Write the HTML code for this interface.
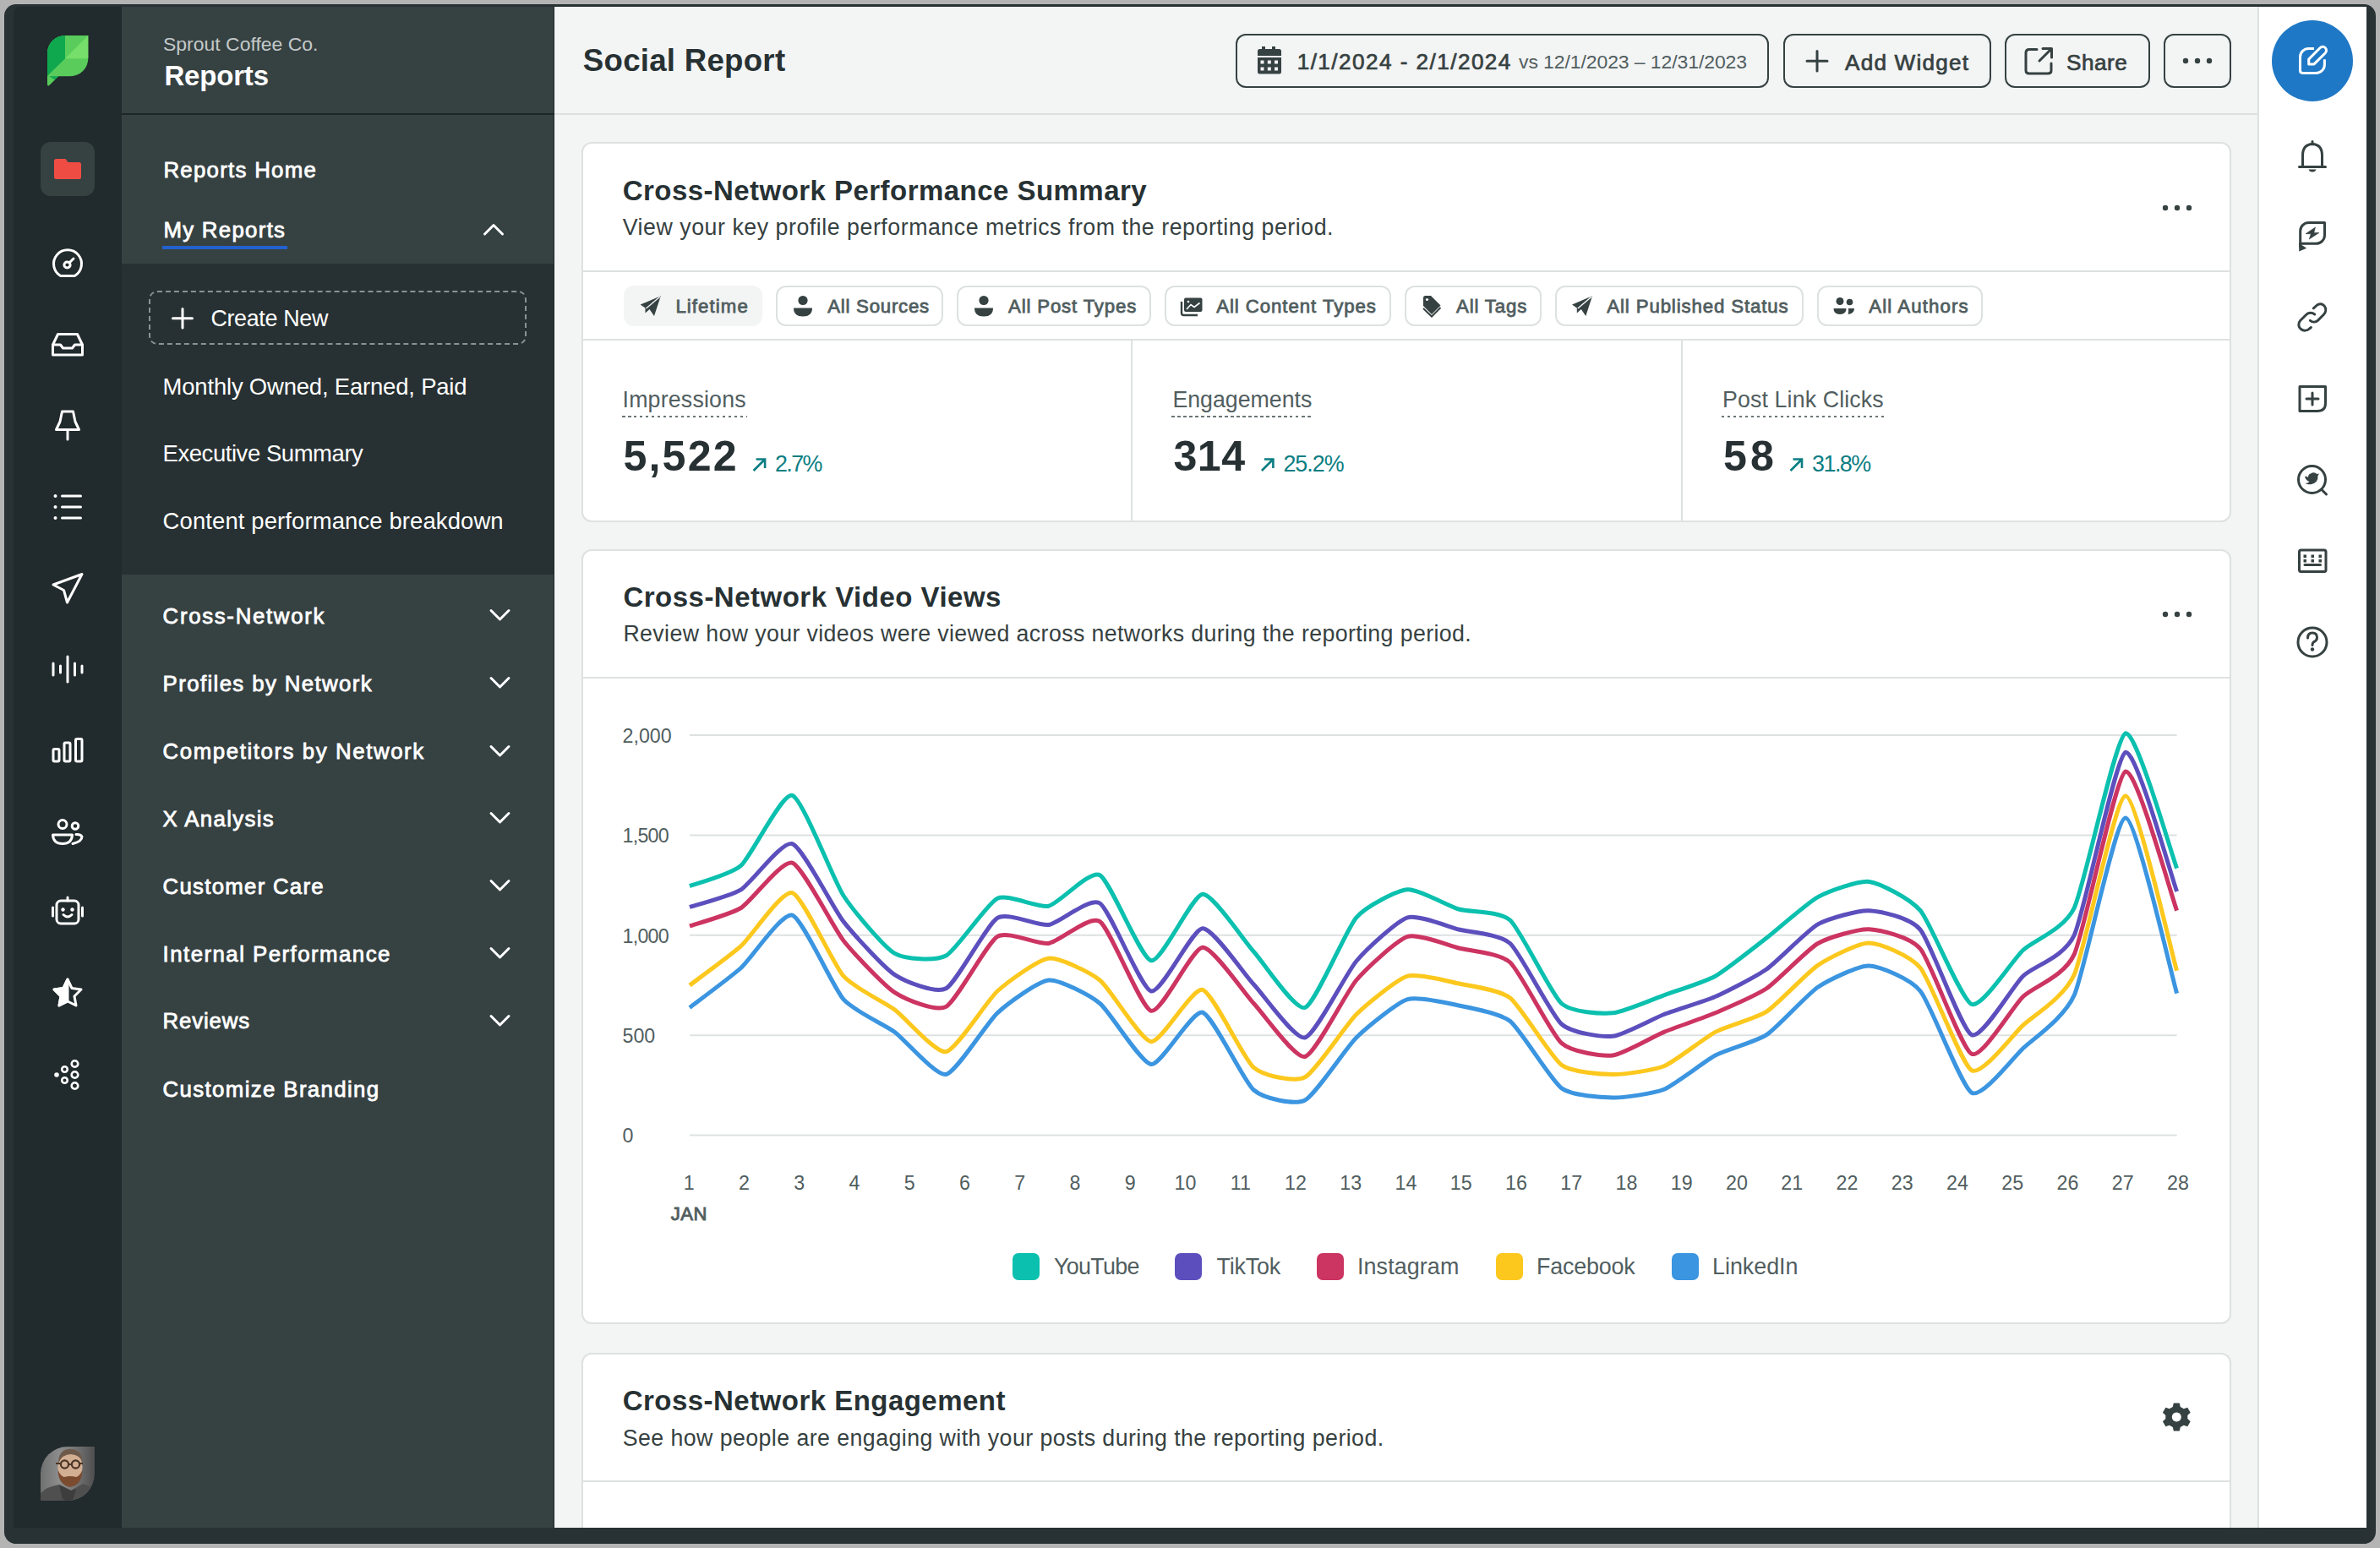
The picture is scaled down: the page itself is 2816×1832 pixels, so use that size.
<!DOCTYPE html>
<html><head><meta charset="utf-8"><title>Social Report</title>
<style>
html,body{margin:0;padding:0;}
body{width:2816px;height:1832px;position:relative;overflow:hidden;background:#b4b4b4;font-family:"Liberation Sans",sans-serif;}
.a{position:absolute;}
.t{position:absolute;white-space:nowrap;line-height:1;}
svg.a{overflow:visible;}
</style></head><body>
<div class="a" style="left:5px;top:5px;width:2806px;height:1822px;background:#283133;border-radius:14px;"></div>
<div class="a" style="left:16px;top:8px;width:128px;height:1800px;background:#212a2c;border-top-left-radius:8px;"></div>
<div class="a" style="left:144px;top:8px;width:512px;height:1800px;background:#364142;"></div>
<div class="a" style="left:144px;top:312px;width:512px;height:368px;background:#273032;"></div>
<div class="a" style="left:144px;top:134px;width:512px;height:2px;background:#1d2527;"></div>
<div class="a" style="left:655px;top:8px;width:1px;height:1800px;background:#1d2527;"></div>
<div class="a" style="left:656px;top:8px;width:2017px;height:1800px;background:#f3f4f4;"></div>
<div class="a" style="left:656px;top:134px;width:2017px;height:2px;background:#dee1e1;"></div>
<div class="a" style="left:2673px;top:8px;width:127px;height:1800px;background:#fff;"></div>
<div class="a" style="left:2671px;top:8px;width:2px;height:1800px;background:#dee1e1;"></div>
<svg class="a" style="left:50px;top:36px;" width="60" height="72" viewBox="50 36 60 72">
<defs><clipPath id="lf"><path d="M56 62.9 A21 21 0 0 1 77 41.9 H104.3 V69.2 A21 21 0 0 1 83.3 90.2 H69.2 L58.6 100.8 Q57 102.4 56 100.5 Z"/></clipPath></defs>
<g clip-path="url(#lf)">
<rect x="50" y="36" width="60" height="72" fill="#59cc5b"/>
<path d="M50 36 H77 V69.2 L50 96 Z" fill="#0fa84f"/>
<path d="M77 69.2 L104.3 41.9 L110 41.9 V69.2 Z" fill="#76de6a"/>
<path d="M58 90.2 L69.2 90.2 L65 94.5 Z" fill="#0fa84f"/>
</g></svg>
<div class="a" style="left:48px;top:168px;width:64px;height:64px;background:#364142;border-radius:12px;"></div>
<svg class="a" style="left:60px;top:184px;" width="40" height="32" viewBox="60 184 40 32"><path d="M64 190.5 Q64 188 66.5 188 H77.5 L80.5 192 H93.5 Q96 192 96 194.5 V209.5 Q96 212 93.5 212 H66.5 Q64 212 64 209.5 Z" fill="#ef4d44"/></svg>
<svg class="a" style="left:56px;top:288px;" width="48" height="48" viewBox="56 288 48 48"><g fill="none" stroke="#ffffff" stroke-width="3" stroke-linecap="round" stroke-linejoin="round"><path d="M71.6 326.5 A16.5 16.5 0 1 1 88.4 326.5 Z"/><circle cx="79.5" cy="313.5" r="3.6"/><path d="M82.3 310.7 L87 306"/></g></svg>
<svg class="a" style="left:56px;top:384px;" width="48" height="48" viewBox="56 384 48 48"><g fill="none" stroke="#ffffff" stroke-width="3" stroke-linecap="round" stroke-linejoin="round"><path d="M62.5 408 L68.5 395.5 H91.5 L97.5 408 V420 H62.5 Z"/><path d="M62.5 408 H71.5 L74.5 412 H85.5 L88.5 408 H97.5"/></g></svg>
<svg class="a" style="left:56px;top:480px;" width="48" height="48" viewBox="56 480 48 48"><g fill="none" stroke="#ffffff" stroke-width="3" stroke-linecap="round" stroke-linejoin="round"><path d="M73.5 487 H86.5 L89 499 L93.5 508.5 H66.5 L71 499 Z"/><path d="M80 509 V520"/></g></svg>
<svg class="a" style="left:56px;top:576px;" width="48" height="48" viewBox="56 576 48 48"><g fill="none" stroke="#ffffff" stroke-width="3" stroke-linecap="round" stroke-linejoin="round"><path d="M73.5 587 H95.5 M73.5 600 H95.5 M73.5 613 H95.5"/></g><g fill="#ffffff"><circle cx="65.5" cy="587" r="2"/><circle cx="65.5" cy="600" r="2"/><circle cx="65.5" cy="613" r="2"/></g></svg>
<svg class="a" style="left:56px;top:672px;" width="48" height="48" viewBox="56 672 48 48"><g fill="none" stroke="#ffffff" stroke-width="3" stroke-linecap="round" stroke-linejoin="round"><path d="M63 692 L97 679.5 L79.5 713 L75.5 698.5 Z"/></g></svg>
<svg class="a" style="left:56px;top:768px;" width="48" height="48" viewBox="56 768 48 48"><g fill="none" stroke="#ffffff" stroke-width="3" stroke-linecap="round" stroke-linejoin="round"><path d="M63 785 V799 M71.5 788 V796 M80 777 V807 M88.5 785 V799 M97 788 V796"/></g></svg>
<svg class="a" style="left:56px;top:864px;" width="48" height="48" viewBox="56 864 48 48"><g fill="none" stroke="#ffffff" stroke-width="3" stroke-linecap="round" stroke-linejoin="round"><rect x="63" y="886.5" width="7" height="14.5" rx="1.5"/><rect x="76" y="879" width="7" height="22" rx="1.5"/><rect x="89.5" y="874.5" width="7.5" height="26.5" rx="1.5"/></g></svg>
<svg class="a" style="left:56px;top:960px;" width="48" height="48" viewBox="56 960 48 48"><g fill="none" stroke="#ffffff" stroke-width="3" stroke-linecap="round" stroke-linejoin="round"><circle cx="74" cy="975.5" r="5"/><path d="M62.5 988 H85.5 Q85 998.5 74 998.5 Q63 998.5 62.5 988 Z"/><circle cx="89" cy="977.5" r="3.8"/><path d="M86 998.5 Q97 996 97 990 Q95 987 90 987.5"/></g></svg>
<svg class="a" style="left:56px;top:1054px;" width="48" height="48" viewBox="56 1054 48 48"><g fill="none" stroke="#ffffff" stroke-width="3" stroke-linecap="round" stroke-linejoin="round"><rect x="67" y="1066" width="26" height="27" rx="5"/><path d="M80 1062 V1066 M62.5 1074 V1084 M97.5 1074 V1084"/><path d="M75 1082.5 Q80 1087.5 85 1082.5"/></g><g fill="#ffffff"><circle cx="74.5" cy="1076.5" r="2.2"/><circle cx="85.5" cy="1076.5" r="2.2"/></g></svg>
<svg class="a" style="left:56px;top:1151px;" width="48" height="48" viewBox="56 1151 48 48"><g fill="none" stroke="#ffffff" stroke-width="3" stroke-linecap="round" stroke-linejoin="round"><path d="M80 1159 L85 1169.5 L96 1171 L88 1179 L90 1190 L80 1185 L70 1190 L72 1179 L64 1171 L75 1169.5 Z"/></g><path d="M80 1159 L75 1169.5 L64 1171 L72 1179 L70 1190 L80 1185 Z" fill="#ffffff" stroke="#ffffff" stroke-width="3" stroke-linejoin="round"/></svg>
<svg class="a" style="left:56px;top:1248px;" width="48" height="48" viewBox="56 1248 48 48"><circle cx="67" cy="1272" r="2.8" fill="#ffffff"/><g fill="none" stroke="#ffffff" stroke-width="2.6"><circle cx="76.5" cy="1265.5" r="3.3"/><circle cx="76.5" cy="1278.5" r="3.3"/><circle cx="88.5" cy="1259" r="3.8"/><circle cx="88.5" cy="1272" r="3.8"/><circle cx="88.5" cy="1285" r="3.8"/></g></svg>
<svg class="a" style="left:48px;top:1712px" width="64" height="64" viewBox="0 0 64 64">
<defs><clipPath id="avc"><path d="M32 0 H64 V32 A32 32 0 0 1 32 64 H0 V32 A32 32 0 0 1 32 0 Z"/></clipPath>
<linearGradient id="avbg" x1="0" x2="1" y1="0" y2="0"><stop offset="0" stop-color="#6f7070"/><stop offset="0.35" stop-color="#8d8d8d"/><stop offset="0.75" stop-color="#6a6a6a"/><stop offset="1" stop-color="#4e4e4e"/></linearGradient></defs>
<g clip-path="url(#avc)">
<rect width="64" height="64" fill="url(#avbg)"/>
<path d="M0 64 V55 Q8 47 22 45 L36 52 L50 44 Q60 47 64 52 V64 Z" fill="#4f4f50"/>
<path d="M22 45 L26 62 L30 64 H38 L42 50 L36 52 Z" fill="#3d3d3e"/>
<ellipse cx="35" cy="24" rx="14.5" ry="19" fill="#d2ae93"/>
<path d="M21 20 Q21 3 35 3 Q49 3 50 19 Q47 10 36 9 Q25 9 21 20 Z" fill="#6e5a4a"/>
<path d="M20.5 28 Q21 45 35 48 Q49 45 49.5 28 Q46 35 42 36 Q35 34 28 36 Q24 35 20.5 28 Z" fill="#7b4b30"/>
<g fill="none" stroke="#4a3526" stroke-width="2.2"><circle cx="28.5" cy="21" r="4.6"/><circle cx="41.5" cy="21" r="4.6"/><path d="M33 21 H37 M18 20 H24 M46 20 H50"/></g>
</g></svg>
<div class="t" style="left:193.00px;top:41.26px;font-size:22.97px;color:#c3c9c9;">Sprout Coffee Co.</div>
<div class="t" style="left:194.40px;top:72.87px;font-size:32.99px;color:#ffffff;font-weight:700;letter-spacing:-0.167px;">Reports</div>
<div class="t" style="left:193.40px;top:188.62px;font-size:25.84px;color:#ffffff;letter-spacing:1.273px;-webkit-text-stroke:0.8px #ffffff;">Reports Home</div>
<div class="t" style="left:193.40px;top:260.12px;font-size:25.84px;color:#ffffff;letter-spacing:1.289px;-webkit-text-stroke:0.8px #ffffff;">My Reports</div>
<div class="a" style="left:192px;top:291px;width:148px;height:4px;background:#2461cf;"></div>
<svg class="a" style="left:568px;top:258px;" width="32" height="26" viewBox="568 258 32 26"><path d="M573.5 277 L584 266.5 L594.5 277" fill="none" stroke="#fff" stroke-width="3" stroke-linecap="round" stroke-linejoin="round"/></svg>
<div class="a" style="left:176px;top:344px;width:447px;height:64px;box-sizing:border-box;border:2px dashed #8a9394;border-radius:10px;"></div>
<svg class="a" style="left:200px;top:364px;" width="32" height="26" viewBox="200 364 32 26"><path d="M216 365.5 V388 M204.5 376.7 H227.5" stroke="#fff" stroke-width="3" stroke-linecap="round"/></svg>
<div class="t" style="left:249.40px;top:363.94px;font-size:26.89px;color:#ffffff;letter-spacing:-0.333px;">Create New</div>
<div class="t" style="left:192.60px;top:443.55px;font-size:27.47px;color:#ffffff;letter-spacing:-0.192px;">Monthly Owned, Earned, Paid</div>
<div class="t" style="left:192.60px;top:523.45px;font-size:27.47px;color:#ffffff;letter-spacing:-0.438px;">Executive Summary</div>
<div class="t" style="left:192.60px;top:603.45px;font-size:27.47px;color:#ffffff;letter-spacing:0.107px;">Content performance breakdown</div>
<div class="t" style="left:192.60px;top:716.82px;font-size:25.84px;color:#ffffff;letter-spacing:1.667px;-webkit-text-stroke:0.8px #ffffff;">Cross-Network</div>
<svg class="a" style="left:576px;top:716px;" width="32" height="20" viewBox="576 716 32 20"><path d="M581 722.5 L591.5 733 L602 722.5" fill="none" stroke="#fff" stroke-width="3" stroke-linecap="round" stroke-linejoin="round"/></svg>
<div class="t" style="left:192.60px;top:796.82px;font-size:25.84px;color:#ffffff;letter-spacing:1.367px;-webkit-text-stroke:0.8px #ffffff;">Profiles by Network</div>
<svg class="a" style="left:576px;top:796px;" width="32" height="20" viewBox="576 796 32 20"><path d="M581 802.5 L591.5 813 L602 802.5" fill="none" stroke="#fff" stroke-width="3" stroke-linecap="round" stroke-linejoin="round"/></svg>
<div class="t" style="left:192.60px;top:877.32px;font-size:25.84px;color:#ffffff;letter-spacing:1.571px;-webkit-text-stroke:0.8px #ffffff;">Competitors by Network</div>
<svg class="a" style="left:576px;top:876.5px;" width="32" height="20" viewBox="576 876.5 32 20"><path d="M581 883.0 L591.5 893.5 L602 883.0" fill="none" stroke="#fff" stroke-width="3" stroke-linecap="round" stroke-linejoin="round"/></svg>
<div class="t" style="left:192.60px;top:956.82px;font-size:25.84px;color:#ffffff;letter-spacing:1.333px;-webkit-text-stroke:0.8px #ffffff;">X Analysis</div>
<svg class="a" style="left:576px;top:956px;" width="32" height="20" viewBox="576 956 32 20"><path d="M581 962.5 L591.5 973 L602 962.5" fill="none" stroke="#fff" stroke-width="3" stroke-linecap="round" stroke-linejoin="round"/></svg>
<div class="t" style="left:192.60px;top:1036.82px;font-size:25.84px;color:#ffffff;letter-spacing:1.250px;-webkit-text-stroke:0.8px #ffffff;">Customer Care</div>
<svg class="a" style="left:576px;top:1036px;" width="32" height="20" viewBox="576 1036 32 20"><path d="M581 1042.5 L591.5 1053 L602 1042.5" fill="none" stroke="#fff" stroke-width="3" stroke-linecap="round" stroke-linejoin="round"/></svg>
<div class="t" style="left:192.60px;top:1116.82px;font-size:25.84px;color:#ffffff;letter-spacing:1.453px;-webkit-text-stroke:0.8px #ffffff;">Internal Performance</div>
<svg class="a" style="left:576px;top:1116px;" width="32" height="20" viewBox="576 1116 32 20"><path d="M581 1122.5 L591.5 1133 L602 1122.5" fill="none" stroke="#fff" stroke-width="3" stroke-linecap="round" stroke-linejoin="round"/></svg>
<div class="t" style="left:192.60px;top:1196.42px;font-size:25.84px;color:#ffffff;letter-spacing:0.833px;-webkit-text-stroke:0.8px #ffffff;">Reviews</div>
<svg class="a" style="left:576px;top:1195.6px;" width="32" height="20" viewBox="576 1195.6 32 20"><path d="M581 1202.1 L591.5 1212.6 L602 1202.1" fill="none" stroke="#fff" stroke-width="3" stroke-linecap="round" stroke-linejoin="round"/></svg>
<div class="t" style="left:192.60px;top:1277.32px;font-size:25.84px;color:#ffffff;letter-spacing:1.353px;-webkit-text-stroke:0.8px #ffffff;">Customize Branding</div>
<div class="t" style="left:689.80px;top:53.69px;font-size:36.63px;color:#273133;font-weight:700;letter-spacing:0.267px;">Social Report</div>
<div class="a" style="left:1462px;top:40px;width:631px;height:64px;box-sizing:border-box;border:2px solid #364141;border-radius:12px;"></div>
<svg class="a" style="left:1486px;top:54px;" width="32" height="36" viewBox="1486 54 32 36"><path d="M1488 66 V60.5 Q1488 58 1490.5 58 H1493 V55 H1497 V58 H1505 V55 H1509 V58 H1513.5 Q1516 58 1516 60.5 V66 Z M1488 68 H1516 V85 Q1516 87.5 1513.5 87.5 H1490.5 Q1488 87.5 1488 85 Z" fill="#364141"/><g fill="#f3f4f4"><rect x="1491.5" y="71.5" width="4" height="4"/><rect x="1499.8" y="71.5" width="4" height="4"/><rect x="1508" y="71.5" width="4" height="4"/><rect x="1491.5" y="79.5" width="4" height="4"/><rect x="1499.8" y="79.5" width="4" height="4"/><rect x="1508" y="79.5" width="4" height="4"/></g></svg>
<div class="t" style="left:1534.70px;top:60.49px;font-size:26.12px;color:#364141;letter-spacing:1.456px;-webkit-text-stroke:0.7px #364141;">1/1/2024 - 2/1/2024</div>
<div class="t" style="left:1797.00px;top:61.56px;font-size:22.97px;color:#515e5f;letter-spacing:-0.083px;">vs 12/1/2023 – 12/31/2023</div>
<div class="a" style="left:2110px;top:40px;width:246px;height:64px;box-sizing:border-box;border:2px solid #364141;border-radius:12px;"></div>
<svg class="a" style="left:2134px;top:58px;" width="32" height="28" viewBox="2134 58 32 28"><path d="M2150 60.5 V84 M2138 72.2 H2162" stroke="#364141" stroke-width="3" stroke-linecap="round"/></svg>
<div class="t" style="left:2183.00px;top:60.59px;font-size:26.12px;color:#364141;letter-spacing:1.222px;-webkit-text-stroke:0.7px #364141;">Add Widget</div>
<div class="a" style="left:2372px;top:40px;width:172px;height:64px;box-sizing:border-box;border:2px solid #364141;border-radius:12px;"></div>
<svg class="a" style="left:2392px;top:54px;" width="40" height="36" viewBox="2392 54 40 36"><g fill="none" stroke="#364141" stroke-width="3" stroke-linecap="round" stroke-linejoin="round"><path d="M2410 58.5 H2401 Q2397 58.5 2397 62.5 V83.5 Q2397 87 2401 87 H2423 Q2427 87 2427 83.5 V75"/><path d="M2413 72 L2427 58 M2417 57.5 H2427.5 V68"/></g></svg>
<div class="t" style="left:2445.00px;top:60.59px;font-size:26.12px;color:#364141;letter-spacing:0.500px;-webkit-text-stroke:0.7px #364141;">Share</div>
<div class="a" style="left:2560px;top:40px;width:80px;height:64px;box-sizing:border-box;border:2px solid #364141;border-radius:12px;"></div>
<svg class="a" style="left:2578px;top:64px;" width="44" height="16" viewBox="2578 64 44 16"><g fill="#364141"><circle cx="2586" cy="72" r="3.2"/><circle cx="2600" cy="72" r="3.2"/><circle cx="2614" cy="72" r="3.2"/></g></svg>
<div class="a" style="left:2688px;top:24px;width:96px;height:96px;border-radius:50%;background:#1f78c5;"></div>
<svg class="a" style="left:2712px;top:50px;" width="48" height="44" viewBox="2712 50 48 44"><g fill="none" stroke="#fff" stroke-width="3" stroke-linejoin="round"><path d="M2737.9 57.5 H2731.5 A10 10 0 0 0 2721.5 67.5 V83.5 Q2721.5 86.4 2724.4 86.4 H2740.4 A10 10 0 0 0 2750.4 76.4 V70.2"/><path d="M2731.7 75.9 V70.1 L2745 56.8 C2747 54.8 2749.5 54.8 2751.2 56.5 C2753 58.3 2753 61 2751 63 L2738 75.9 Z"/></g></svg>
<svg class="a" style="left:2712px;top:160px;" width="48" height="48" viewBox="2712 160 48 48"><g fill="none" stroke="#364141" stroke-width="3" stroke-linecap="round" stroke-linejoin="round"><path d="M2720.5 197.5 H2751.5 M2724.5 197.5 V184 Q2724.5 171 2736 170.5 Q2747.5 171 2747.5 184 V197.5"/><path d="M2736 167.5 V170"/></g><path d="M2731.5 200.5 H2740.5 Q2739.5 203.5 2736 203.5 Q2732.5 203.5 2731.5 200.5 Z" fill="#364141"/></svg>
<svg class="a" style="left:2712px;top:255px;" width="48" height="48" viewBox="2712 255 48 48"><g fill="none" stroke="#364141" stroke-width="3" stroke-linecap="round" stroke-linejoin="round"><path d="M2721.7 292 V273.5 A10 10 0 0 1 2731.7 263.5 H2750.5 V278.3 A10 10 0 0 1 2740.5 288.3 H2723.5"/></g><path d="M2720.2 287 V297.6 L2729.2 293.7 L2723.5 290 Z" fill="#364141"/><path d="M2739.5 269 L2728 276.7 H2734.3 L2732.3 283 L2744 275.4 H2737.8 Z" fill="#364141" stroke="#364141" stroke-width="0.6" stroke-linejoin="round"/></svg>
<svg class="a" style="left:2712px;top:352px;" width="48" height="48" viewBox="2712 352 48 48"><g fill="none" stroke="#364141" stroke-width="3" stroke-linecap="round" stroke-linejoin="round"><path d="M2738.7 372 C2735.5 369.5 2731 369.8 2728.6 372.5 L2721.8 379.3 C2718.8 382.5 2719.2 387 2722.5 389.5 C2725.5 392 2730 391.5 2732.5 389 L2734.4 387.5"/><path d="M2737.3 364.8 L2741.6 361 C2744.5 358.7 2748.5 359.5 2750.5 362.5 C2752.5 365.5 2752 369.5 2749.4 372.2 L2742.6 379.1 C2740 381.5 2736 381.5 2733.4 379.3"/></g></svg>
<svg class="a" style="left:2712px;top:448px;" width="48" height="48" viewBox="2712 448 48 48"><g fill="none" stroke="#364141" stroke-width="3" stroke-linecap="round" stroke-linejoin="round"><path d="M2721 457.5 H2751.5 V477 Q2751.5 486.5 2742 486.5 H2721 Z"/><path d="M2736 465 V479 M2729 472 H2743"/></g></svg>
<svg class="a" style="left:2712px;top:543px;" width="48" height="48" viewBox="2712 543 48 48"><g fill="none" stroke="#364141" stroke-width="3" stroke-linecap="round" stroke-linejoin="round"><circle cx="2735.5" cy="567.5" r="16"/><path d="M2747 579.5 L2752.5 585"/></g><path d="M2727 564 Q2729 563 2731 565 Q2731 561 2734 560.5 Q2738 558 2741.5 561 L2744 560.5 L2742.5 563 Q2743 571 2735 573 Q2731 574 2727.5 572 Q2731 572 2732.5 570 Q2728.5 569 2727 564 Z" fill="#364141"/></svg>
<svg class="a" style="left:2712px;top:640px;" width="48" height="48" viewBox="2712 640 48 48"><g fill="none" stroke="#364141" stroke-width="3" stroke-linecap="round" stroke-linejoin="round"><rect x="2720.5" y="651" width="31.5" height="25.5" rx="2"/><path d="M2727 668.5 H2745.5"/></g><g fill="#364141"><rect x="2725.5" y="656.5" width="3.5" height="3.5"/><rect x="2734.5" y="656.5" width="3.5" height="3.5"/><rect x="2743.5" y="656.5" width="3.5" height="3.5"/><rect x="2725.5" y="662" width="3.5" height="3.5"/><rect x="2734.5" y="662" width="3.5" height="3.5"/><rect x="2743.5" y="662" width="3.5" height="3.5"/></g></svg>
<svg class="a" style="left:2712px;top:736px;" width="48" height="48" viewBox="2712 736 48 48"><g fill="none" stroke="#364141" stroke-width="3" stroke-linecap="round" stroke-linejoin="round"><circle cx="2736" cy="760" r="17"/><path d="M2730.5 755 Q2730.5 749 2736 749 Q2741.5 749 2741.5 754.5 Q2741.5 758 2738 759.5 Q2736 760.5 2736 763.5"/></g><circle cx="2736" cy="768.5" r="2.2" fill="#364141"/></svg>
<div class="a" style="left:688px;top:168px;width:1952px;height:450px;box-sizing:border-box;background:#fff;border:2px solid #dee1e1;border-radius:12px;"></div>
<div class="t" style="left:736.70px;top:208.87px;font-size:32.99px;color:#273133;font-weight:700;letter-spacing:0.469px;">Cross-Network Performance Summary</div>
<div class="t" style="left:736.70px;top:256.06px;font-size:26.74px;color:#364141;letter-spacing:0.537px;">View your key profile performance metrics from the reporting period.</div>
<svg class="a" style="left:2550px;top:236px;" width="52" height="20" viewBox="2550 236 52 20"><g fill="#364141"><circle cx="2562" cy="246" r="3.2"/><circle cx="2576" cy="246" r="3.2"/><circle cx="2590" cy="246" r="3.2"/></g></svg>
<div class="a" style="left:690px;top:320px;width:1948px;height:2px;background:#dee1e1;"></div>
<div class="a" style="left:690px;top:401px;width:1948px;height:2px;background:#dee1e1;"></div>
<div class="a" style="left:738px;top:338px;width:164px;height:48px;background:#f3f4f4;border-radius:12px;"></div>
<div class="a" style="left:918px;top:338px;width:198px;height:48px;box-sizing:border-box;border:2px solid #dee1e1;border-radius:12px;"></div>
<div class="a" style="left:1132px;top:338px;width:230px;height:48px;box-sizing:border-box;border:2px solid #dee1e1;border-radius:12px;"></div>
<div class="a" style="left:1378px;top:338px;width:268px;height:48px;box-sizing:border-box;border:2px solid #dee1e1;border-radius:12px;"></div>
<div class="a" style="left:1662px;top:338px;width:162px;height:48px;box-sizing:border-box;border:2px solid #dee1e1;border-radius:12px;"></div>
<div class="a" style="left:1840px;top:338px;width:294px;height:48px;box-sizing:border-box;border:2px solid #dee1e1;border-radius:12px;"></div>
<div class="a" style="left:2150px;top:338px;width:196px;height:48px;box-sizing:border-box;border:2px solid #dee1e1;border-radius:12px;"></div>
<svg class="a" style="left:752px;top:346px;" width="34" height="32" viewBox="752 346 34 32"><path d="M757.7 360.5 L781.8 350.3 L774 374 L768.5 366 L763.5 370.5 L763.5 364.5 Z" fill="#364141"/><path d="M764.5 365 L781 351" stroke="#f3f4f4" stroke-width="1.4"/></svg>
<svg class="a" style="left:934px;top:346px;" width="32" height="32" viewBox="934 346 32 32"><circle cx="950" cy="355.5" r="5.6" fill="#364141"/><path d="M939 364.5 H961 Q961 374.5 950 374.5 Q939 374.5 939 364.5 Z" fill="#364141"/></svg>
<svg class="a" style="left:1148px;top:346px;" width="32" height="32" viewBox="1148 346 32 32"><circle cx="1164" cy="355.5" r="5.6" fill="#364141"/><path d="M1153 364.5 H1175 Q1175 374.5 1164 374.5 Q1153 374.5 1153 364.5 Z" fill="#364141"/></svg>
<svg class="a" style="left:1394px;top:346px;" width="32" height="32" viewBox="1394 346 32 32"><rect x="1401" y="352.5" width="21.5" height="16.5" rx="2" fill="#364141"/><path d="M1398 357 V370.5 Q1398 373 1400.5 373 H1417" fill="none" stroke="#364141" stroke-width="2.4"/><circle cx="1406" cy="357" r="1.3" fill="#fff"/><path d="M1404 366 L1409 360.5 L1413 363.5 L1419.5 358.5" fill="none" stroke="#fff" stroke-width="1.6"/></svg>
<svg class="a" style="left:1680px;top:346px;" width="30" height="32" viewBox="1680 346 30 32"><path d="M1684 352.5 Q1684 350 1686.5 350 H1693 L1704.5 361.5 L1694 372 L1684 362 Z" fill="#364141"/><circle cx="1688.5" cy="354.5" r="1.6" fill="#fff"/><path d="M1684 365 L1694 374.5 L1704.5 364" fill="none" stroke="#364141" stroke-width="2"/></svg>
<svg class="a" style="left:1856px;top:346px;" width="32" height="32" viewBox="1856 346 32 32"><path d="M1860 360.5 L1884 350.3 L1876.3 374 L1870.8 366 L1865.8 370.5 L1865.8 364.5 Z" fill="#364141"/><path d="M1866.8 365 L1883.3 351" stroke="#fff" stroke-width="1.4"/></svg>
<svg class="a" style="left:2166px;top:346px;" width="32" height="30" viewBox="2166 346 32 30"><circle cx="2177" cy="356.5" r="4.5" fill="#364141"/><circle cx="2188.5" cy="357.5" r="3.8" fill="#364141"/><path d="M2169.5 365 H2184.5 Q2184.5 372 2177 372 Q2169.5 372 2169.5 365 Z" fill="#364141"/><path d="M2186.5 372 Q2194 371 2194 365 H2187 Q2187.5 369 2186.5 372 Z" fill="#364141"/></svg>
<div class="t" style="left:799.40px;top:352.20px;font-size:22.21px;color:#515e5f;letter-spacing:1.086px;-webkit-text-stroke:0.8px #515e5f;">Lifetime</div>
<div class="t" style="left:979.20px;top:352.20px;font-size:22.21px;color:#515e5f;letter-spacing:0.770px;-webkit-text-stroke:0.8px #515e5f;">All Sources</div>
<div class="t" style="left:1193.00px;top:352.20px;font-size:22.21px;color:#515e5f;letter-spacing:0.846px;-webkit-text-stroke:0.8px #515e5f;">All Post Types</div>
<div class="t" style="left:1439.20px;top:352.20px;font-size:22.21px;color:#515e5f;letter-spacing:0.944px;-webkit-text-stroke:0.8px #515e5f;">All Content Types</div>
<div class="t" style="left:1723.00px;top:352.20px;font-size:22.21px;color:#515e5f;letter-spacing:0.857px;-webkit-text-stroke:0.8px #515e5f;">All Tags</div>
<div class="t" style="left:1901.30px;top:352.20px;font-size:22.21px;color:#515e5f;letter-spacing:0.889px;-webkit-text-stroke:0.8px #515e5f;">All Published Status</div>
<div class="t" style="left:2211.30px;top:352.20px;font-size:22.21px;color:#515e5f;letter-spacing:1.110px;-webkit-text-stroke:0.8px #515e5f;">All Authors</div>
<div class="a" style="left:1338px;top:403px;width:2px;height:213px;background:#dee1e1;"></div>
<div class="a" style="left:1989px;top:403px;width:2px;height:213px;background:#dee1e1;"></div>
<div class="t" style="left:736.50px;top:460.46px;font-size:26.74px;color:#515e5f;letter-spacing:0.200px;">Impressions</div>
<div class="a" style="left:735.5px;top:491.5px;width:148px;height:2px;background:repeating-linear-gradient(90deg,#6b7677 0 3.5px,transparent 3.5px 7px);"></div>
<div class="t" style="left:737.50px;top:514.75px;font-size:50.15px;color:#273133;font-weight:700;letter-spacing:2.150px;">5,522</div>
<svg class="a" style="left:889px;top:536px;" width="22" height="26" viewBox="889 536 22 26"><path d="M891.6 557 L904.6 544 M894.6 543.5 H905.1 V554" fill="none" stroke="#0b7e83" stroke-width="2.6"/></svg>
<div class="t" style="left:917.10px;top:535.94px;font-size:26.89px;color:#0b7e83;letter-spacing:-1.667px;">2.7%</div>
<div class="t" style="left:1387.40px;top:460.46px;font-size:26.74px;color:#515e5f;">Engagements</div>
<div class="a" style="left:1386.4px;top:491.5px;width:167px;height:2px;background:repeating-linear-gradient(90deg,#6b7677 0 3.5px,transparent 3.5px 7px);"></div>
<div class="t" style="left:1388.40px;top:514.75px;font-size:50.15px;color:#273133;font-weight:700;letter-spacing:0.500px;">314</div>
<svg class="a" style="left:1490px;top:536px;" width="22" height="26" viewBox="1490 536 22 26"><path d="M1492.9 557 L1505.9 544 M1495.9 543.5 H1506.4 V554" fill="none" stroke="#0b7e83" stroke-width="2.6"/></svg>
<div class="t" style="left:1518.40px;top:535.94px;font-size:26.89px;color:#0b7e83;letter-spacing:-1.000px;">25.2%</div>
<div class="t" style="left:2038.00px;top:460.46px;font-size:26.74px;color:#515e5f;letter-spacing:0.133px;">Post Link Clicks</div>
<div class="a" style="left:2037px;top:491.5px;width:193px;height:2px;background:repeating-linear-gradient(90deg,#6b7677 0 3.5px,transparent 3.5px 7px);"></div>
<div class="t" style="left:2039.00px;top:514.75px;font-size:50.15px;color:#273133;font-weight:700;letter-spacing:4.000px;">58</div>
<svg class="a" style="left:2116px;top:536px;" width="22" height="26" viewBox="2116 536 22 26"><path d="M2118.5 557 L2131.5 544 M2121.5 543.5 H2132.0 V554" fill="none" stroke="#0b7e83" stroke-width="2.6"/></svg>
<div class="t" style="left:2144.00px;top:535.94px;font-size:26.89px;color:#0b7e83;letter-spacing:-1.500px;">31.8%</div>
<div class="a" style="left:688px;top:650px;width:1952px;height:917px;box-sizing:border-box;background:#fff;border:2px solid #dee1e1;border-radius:12px;"></div>
<div class="t" style="left:737.40px;top:690.37px;font-size:32.99px;color:#273133;font-weight:700;letter-spacing:0.500px;">Cross-Network Video Views</div>
<div class="t" style="left:737.40px;top:737.46px;font-size:26.74px;color:#364141;letter-spacing:0.385px;">Review how your videos were viewed across networks during the reporting period.</div>
<svg class="a" style="left:2550px;top:717px;" width="52" height="20" viewBox="2550 717 52 20"><g fill="#364141"><circle cx="2562" cy="727" r="3.2"/><circle cx="2576" cy="727" r="3.2"/><circle cx="2590" cy="727" r="3.2"/></g></svg>
<div class="a" style="left:690px;top:801px;width:1948px;height:2px;background:#dee1e1;"></div>
<svg class="a" style="left:800px;top:850px;" width="1800" height="520" viewBox="800 850 1800 520"><path d="M816 870 H2575.6" stroke="#dee1e1" stroke-width="2"/><path d="M816 988.4 H2575.6" stroke="#dee1e1" stroke-width="2"/><path d="M816 1106.8 H2575.6" stroke="#dee1e1" stroke-width="2"/><path d="M816 1225.2 H2575.6" stroke="#dee1e1" stroke-width="2"/><path d="M816 1343.6 H2575.6" stroke="#dee1e1" stroke-width="2"/><path d="M816.0 1048.6 C822.1 1046.2 864.5 1035.1 876.7 1024.4 C888.8 1013.7 925.2 937.8 937.4 941.4 C949.5 945.0 985.9 1041.3 998.0 1060.0 C1010.2 1078.7 1046.6 1121.3 1058.7 1128.4 C1070.8 1135.5 1107.2 1137.5 1119.4 1131.0 C1131.5 1124.5 1167.9 1069.1 1180.1 1063.2 C1192.2 1057.3 1228.6 1075.0 1240.7 1072.2 C1252.9 1069.5 1289.3 1029.2 1301.4 1035.7 C1313.5 1042.2 1349.9 1134.5 1362.1 1136.8 C1374.2 1139.1 1410.6 1059.4 1422.8 1058.3 C1434.9 1057.2 1471.3 1112.8 1483.4 1126.2 C1495.6 1139.6 1532.0 1196.4 1544.1 1192.4 C1556.2 1188.4 1592.7 1099.8 1604.8 1085.8 C1616.9 1071.8 1653.3 1053.8 1665.5 1052.8 C1677.6 1051.8 1714.0 1072.4 1726.1 1076.0 C1738.3 1079.6 1774.7 1077.8 1786.8 1089.0 C1798.9 1100.2 1835.4 1176.5 1847.5 1187.5 C1859.6 1198.5 1896.0 1199.8 1908.2 1198.8 C1920.3 1197.8 1956.7 1182.2 1968.8 1177.8 C1981.0 1173.4 2017.4 1162.0 2029.5 1155.2 C2041.7 1148.4 2078.1 1119.4 2090.2 1110.0 C2102.3 1100.6 2138.7 1068.3 2150.9 1061.6 C2163.0 1054.9 2199.4 1041.8 2211.5 1043.4 C2223.7 1045.0 2260.1 1063.2 2272.2 1077.7 C2284.4 1092.2 2320.8 1183.8 2332.9 1188.5 C2345.0 1193.2 2381.4 1135.9 2393.6 1124.5 C2405.7 1113.1 2442.1 1100.2 2454.2 1074.5 C2466.4 1048.8 2502.8 872.5 2514.9 867.8 C2527.1 863.1 2569.5 1011.6 2575.6 1027.6" fill="none" stroke="#0bc0ae" stroke-width="5" stroke-linejoin="round"/><path d="M816.0 1073.5 C822.1 1071.4 864.5 1060.3 876.7 1052.8 C888.8 1045.3 925.2 994.8 937.4 998.6 C949.5 1002.4 985.9 1075.1 998.0 1090.6 C1010.2 1106.1 1046.6 1145.7 1058.7 1153.6 C1070.8 1161.5 1107.2 1176.5 1119.4 1169.8 C1131.5 1163.1 1167.9 1093.9 1180.1 1086.4 C1192.2 1078.9 1228.6 1096.2 1240.7 1094.5 C1252.9 1092.8 1289.3 1061.2 1301.4 1069.0 C1313.5 1076.8 1349.9 1170.0 1362.1 1173.0 C1374.2 1176.0 1410.6 1099.5 1422.8 1098.7 C1434.9 1097.9 1471.3 1152.1 1483.4 1165.0 C1495.6 1177.9 1532.0 1230.8 1544.1 1228.0 C1556.2 1225.2 1592.7 1151.7 1604.8 1137.5 C1616.9 1123.3 1653.3 1089.5 1665.5 1085.8 C1677.6 1082.0 1714.0 1096.9 1726.1 1100.0 C1738.3 1103.1 1774.7 1105.3 1786.8 1116.5 C1798.9 1127.7 1835.4 1200.8 1847.5 1211.8 C1859.6 1222.8 1896.0 1227.4 1908.2 1226.3 C1920.3 1225.2 1956.7 1205.2 1968.8 1200.5 C1981.0 1195.8 2017.4 1184.8 2029.5 1179.5 C2041.7 1174.2 2078.1 1155.6 2090.2 1147.0 C2102.3 1138.4 2138.7 1100.8 2150.9 1093.9 C2163.0 1087.0 2199.4 1077.1 2211.5 1077.7 C2223.7 1078.3 2260.1 1085.6 2272.2 1100.3 C2284.4 1115.0 2320.8 1219.2 2332.9 1224.7 C2345.0 1230.2 2381.4 1167.0 2393.6 1155.2 C2405.7 1143.4 2442.1 1133.3 2454.2 1106.8 C2466.4 1080.3 2502.8 895.6 2514.9 890.4 C2527.1 885.2 2569.5 1038.5 2575.6 1055.0" fill="none" stroke="#5c4fbd" stroke-width="5" stroke-linejoin="round"/><path d="M816.0 1096.0 C822.1 1093.8 864.5 1082.0 876.7 1074.5 C888.8 1067.0 925.2 1017.3 937.4 1021.2 C949.5 1025.1 985.9 1097.9 998.0 1113.2 C1010.2 1128.5 1046.6 1166.8 1058.7 1174.6 C1070.8 1182.4 1107.2 1198.0 1119.4 1191.4 C1131.5 1184.8 1167.9 1115.9 1180.1 1108.4 C1192.2 1100.9 1228.6 1118.3 1240.7 1116.5 C1252.9 1114.7 1289.3 1082.6 1301.4 1090.6 C1313.5 1098.6 1349.9 1193.2 1362.1 1196.3 C1374.2 1199.4 1410.6 1122.2 1422.8 1121.3 C1434.9 1120.4 1471.3 1174.6 1483.4 1187.5 C1495.6 1200.4 1532.0 1253.2 1544.1 1250.5 C1556.2 1247.8 1592.7 1174.2 1604.8 1160.0 C1616.9 1145.8 1653.3 1112.2 1665.5 1108.4 C1677.6 1104.6 1714.0 1118.9 1726.1 1122.0 C1738.3 1125.1 1774.7 1127.8 1786.8 1139.0 C1798.9 1150.2 1835.4 1223.4 1847.5 1234.4 C1859.6 1245.4 1896.0 1250.3 1908.2 1249.0 C1920.3 1247.7 1956.7 1226.4 1968.8 1221.4 C1981.0 1216.4 2017.4 1204.0 2029.5 1198.8 C2041.7 1193.6 2078.1 1178.0 2090.2 1169.8 C2102.3 1161.6 2138.7 1123.5 2150.9 1116.5 C2163.0 1109.5 2199.4 1099.1 2211.5 1099.8 C2223.7 1100.5 2260.1 1108.2 2272.2 1123.0 C2284.4 1137.8 2320.8 1241.6 2332.9 1247.3 C2345.0 1253.0 2381.4 1191.3 2393.6 1179.5 C2405.7 1167.7 2442.1 1156.1 2454.2 1129.4 C2466.4 1102.8 2502.8 918.2 2514.9 913.0 C2527.1 907.8 2569.5 1061.2 2575.6 1077.7" fill="none" stroke="#cc3461" stroke-width="5" stroke-linejoin="round"/><path d="M816.0 1166.0 C822.1 1161.4 864.5 1130.6 876.7 1119.7 C888.8 1108.8 925.2 1053.2 937.4 1056.7 C949.5 1060.2 985.9 1141.4 998.0 1155.2 C1010.2 1169.0 1046.6 1186.0 1058.7 1195.0 C1070.8 1204.0 1107.2 1246.9 1119.4 1244.7 C1131.5 1242.5 1167.9 1184.0 1180.1 1173.0 C1192.2 1162.0 1228.6 1135.5 1240.7 1134.2 C1252.9 1132.9 1289.3 1150.2 1301.4 1160.0 C1313.5 1169.8 1349.9 1231.6 1362.1 1232.7 C1374.2 1233.8 1410.6 1168.3 1422.8 1171.4 C1434.9 1174.5 1471.3 1253.1 1483.4 1263.4 C1495.6 1273.7 1532.0 1281.0 1544.1 1274.7 C1556.2 1268.4 1592.7 1212.5 1604.8 1200.5 C1616.9 1188.5 1653.3 1158.9 1665.5 1155.2 C1677.6 1151.5 1714.0 1161.4 1726.1 1164.0 C1738.3 1166.6 1774.7 1171.4 1786.8 1181.0 C1798.9 1190.6 1835.4 1251.2 1847.5 1260.2 C1859.6 1269.2 1896.0 1271.3 1908.2 1271.5 C1920.3 1271.7 1956.7 1266.8 1968.8 1261.8 C1981.0 1256.8 2017.4 1227.9 2029.5 1221.4 C2041.7 1214.9 2078.1 1205.1 2090.2 1197.2 C2102.3 1189.3 2138.7 1150.4 2150.9 1142.3 C2163.0 1134.2 2199.4 1115.7 2211.5 1116.0 C2223.7 1116.3 2260.1 1130.4 2272.2 1145.5 C2284.4 1160.6 2320.8 1259.9 2332.9 1266.7 C2345.0 1273.5 2381.4 1224.7 2393.6 1213.4 C2405.7 1202.1 2442.1 1180.7 2454.2 1153.6 C2466.4 1126.5 2502.8 942.5 2514.9 942.0 C2527.1 941.5 2569.5 1128.1 2575.6 1148.8" fill="none" stroke="#fcc81e" stroke-width="5" stroke-linejoin="round"/><path d="M816.0 1192.4 C822.1 1187.7 864.5 1156.4 876.7 1145.5 C888.8 1134.6 925.2 1079.5 937.4 1083.2 C949.5 1086.9 985.9 1168.9 998.0 1182.7 C1010.2 1196.5 1046.6 1212.5 1058.7 1221.4 C1070.8 1230.3 1107.2 1273.8 1119.4 1271.5 C1131.5 1269.2 1167.9 1210.0 1180.1 1198.8 C1192.2 1187.6 1228.6 1161.1 1240.7 1160.0 C1252.9 1158.9 1289.3 1177.5 1301.4 1187.5 C1313.5 1197.5 1349.9 1258.5 1362.1 1259.6 C1374.2 1260.7 1410.6 1195.2 1422.8 1198.2 C1434.9 1201.2 1471.3 1279.6 1483.4 1290.0 C1495.6 1300.4 1532.0 1308.2 1544.1 1302.0 C1556.2 1295.8 1592.7 1239.9 1604.8 1228.0 C1616.9 1216.1 1653.3 1186.5 1665.5 1182.7 C1677.6 1178.9 1714.0 1187.4 1726.1 1190.0 C1738.3 1192.6 1774.7 1198.7 1786.8 1208.5 C1798.9 1218.3 1835.4 1278.7 1847.5 1287.7 C1859.6 1296.8 1896.0 1298.8 1908.2 1299.0 C1920.3 1299.2 1956.7 1294.3 1968.8 1289.3 C1981.0 1284.3 2017.4 1255.5 2029.5 1249.0 C2041.7 1242.5 2078.1 1232.8 2090.2 1224.7 C2102.3 1216.6 2138.7 1176.4 2150.9 1168.2 C2163.0 1160.0 2199.4 1142.5 2211.5 1143.0 C2223.7 1143.5 2260.1 1158.0 2272.2 1173.0 C2284.4 1188.0 2320.8 1286.4 2332.9 1293.2 C2345.0 1300.0 2381.4 1252.3 2393.6 1240.8 C2405.7 1229.3 2442.1 1205.1 2454.2 1177.8 C2466.4 1150.5 2502.8 968.1 2514.9 967.9 C2527.1 967.7 2569.5 1154.8 2575.6 1175.6" fill="none" stroke="#3b95e0" stroke-width="5" stroke-linejoin="round"/></svg>
<div class="t" style="left:736.50px;top:859.81px;font-size:23.26px;color:#515e5f;">2,000</div>
<div class="t" style="left:736.50px;top:978.21px;font-size:23.26px;color:#515e5f;letter-spacing:-0.750px;">1,500</div>
<div class="t" style="left:736.50px;top:1096.61px;font-size:23.26px;color:#515e5f;letter-spacing:-0.750px;">1,000</div>
<div class="t" style="left:736.50px;top:1215.01px;font-size:23.26px;color:#515e5f;">500</div>
<div class="t" style="left:736.50px;top:1333.41px;font-size:23.26px;color:#515e5f;">0</div>
<div class="t" style="left:808.80px;top:1389.31px;font-size:23.26px;color:#515e5f;">1</div>
<div class="t" style="left:874.05px;top:1389.31px;font-size:23.26px;color:#515e5f;">2</div>
<div class="t" style="left:939.30px;top:1389.31px;font-size:23.26px;color:#515e5f;">3</div>
<div class="t" style="left:1004.54px;top:1389.31px;font-size:23.26px;color:#515e5f;">4</div>
<div class="t" style="left:1069.79px;top:1389.31px;font-size:23.26px;color:#515e5f;">5</div>
<div class="t" style="left:1135.04px;top:1389.31px;font-size:23.26px;color:#515e5f;">6</div>
<div class="t" style="left:1200.29px;top:1389.31px;font-size:23.26px;color:#515e5f;">7</div>
<div class="t" style="left:1265.54px;top:1389.31px;font-size:23.26px;color:#515e5f;">8</div>
<div class="t" style="left:1330.79px;top:1389.31px;font-size:23.26px;color:#515e5f;">9</div>
<div class="t" style="left:1389.53px;top:1389.31px;font-size:23.26px;color:#515e5f;">10</div>
<div class="t" style="left:1455.78px;top:1389.31px;font-size:23.26px;color:#515e5f;">11</div>
<div class="t" style="left:1520.03px;top:1389.31px;font-size:23.26px;color:#515e5f;">12</div>
<div class="t" style="left:1585.28px;top:1389.31px;font-size:23.26px;color:#515e5f;">13</div>
<div class="t" style="left:1650.53px;top:1389.31px;font-size:23.26px;color:#515e5f;">14</div>
<div class="t" style="left:1715.77px;top:1389.31px;font-size:23.26px;color:#515e5f;">15</div>
<div class="t" style="left:1781.02px;top:1389.31px;font-size:23.26px;color:#515e5f;">16</div>
<div class="t" style="left:1846.27px;top:1389.31px;font-size:23.26px;color:#515e5f;">17</div>
<div class="t" style="left:1911.52px;top:1389.31px;font-size:23.26px;color:#515e5f;">18</div>
<div class="t" style="left:1976.77px;top:1389.31px;font-size:23.26px;color:#515e5f;">19</div>
<div class="t" style="left:2042.01px;top:1389.31px;font-size:23.26px;color:#515e5f;">20</div>
<div class="t" style="left:2107.26px;top:1389.31px;font-size:23.26px;color:#515e5f;">21</div>
<div class="t" style="left:2172.51px;top:1389.31px;font-size:23.26px;color:#515e5f;">22</div>
<div class="t" style="left:2237.76px;top:1389.31px;font-size:23.26px;color:#515e5f;">23</div>
<div class="t" style="left:2303.01px;top:1389.31px;font-size:23.26px;color:#515e5f;">24</div>
<div class="t" style="left:2368.26px;top:1389.31px;font-size:23.26px;color:#515e5f;">25</div>
<div class="t" style="left:2433.50px;top:1389.31px;font-size:23.26px;color:#515e5f;">26</div>
<div class="t" style="left:2498.75px;top:1389.31px;font-size:23.26px;color:#515e5f;">27</div>
<div class="t" style="left:2564.00px;top:1389.31px;font-size:23.26px;color:#515e5f;">28</div>
<div class="t" style="left:793.80px;top:1426.01px;font-size:22.08px;color:#515e5f;letter-spacing:0.500px;-webkit-text-stroke:0.9px #515e5f;">JAN</div>
<div class="a" style="left:1198px;top:1483px;width:32px;height:32px;background:#0bc0ae;border-radius:7px;"></div>
<div class="t" style="left:1247.00px;top:1485.94px;font-size:26.89px;color:#515e5f;letter-spacing:-0.700px;">YouTube</div>
<div class="a" style="left:1390px;top:1483px;width:32px;height:32px;background:#5c4fbd;border-radius:7px;"></div>
<div class="t" style="left:1439.40px;top:1485.94px;font-size:26.89px;color:#515e5f;letter-spacing:-0.160px;">TikTok</div>
<div class="a" style="left:1558px;top:1483px;width:32px;height:32px;background:#cc3461;border-radius:7px;"></div>
<div class="t" style="left:1606.00px;top:1485.94px;font-size:26.89px;color:#515e5f;letter-spacing:0.100px;">Instagram</div>
<div class="a" style="left:1770px;top:1483px;width:32px;height:32px;background:#fcc81e;border-radius:7px;"></div>
<div class="t" style="left:1818.00px;top:1485.94px;font-size:26.89px;color:#515e5f;letter-spacing:-0.200px;">Facebook</div>
<div class="a" style="left:1978px;top:1483px;width:32px;height:32px;background:#3b95e0;border-radius:7px;"></div>
<div class="t" style="left:2026.00px;top:1485.94px;font-size:26.89px;color:#515e5f;letter-spacing:-0.014px;">LinkedIn</div>
<div class="a" style="left:688px;top:1601px;width:1952px;height:225px;box-sizing:border-box;background:#fff;border:2px solid #dee1e1;border-radius:12px;"></div>
<div class="t" style="left:736.70px;top:1641.17px;font-size:32.99px;color:#273133;font-weight:700;letter-spacing:0.478px;">Cross-Network Engagement</div>
<div class="t" style="left:736.70px;top:1688.86px;font-size:26.74px;color:#364141;letter-spacing:0.437px;">See how people are engaging with your posts during the reporting period.</div>
<div class="a" style="left:690px;top:1752px;width:1948px;height:2px;background:#dee1e1;"></div>
<svg class="a" style="left:2557px;top:1659px;" width="36" height="36" viewBox="2557 1659 36 36"><g transform="translate(2575.3 1677)"><path fill="#364141" fill-rule="evenodd" d="M-3.5 -15.5 H3.5 L4.5 -11 L8.5 -8.8 L12.9 -10.2 L16.4 -4.2 L13 -1.1 V3.1 L16.4 6.2 L12.9 12.2 L8.5 10.8 L4.5 13 L3.5 17.5 H-3.5 L-4.5 13 L-8.5 10.8 L-12.9 12.2 L-16.4 6.2 L-13 3.1 V-1.1 L-16.4 -4.2 L-12.9 -10.2 L-8.5 -8.8 L-4.5 -11 Z M0 -4.5 A5.5 5.5 0 1 0 0.01 -4.5 Z" transform="translate(0 -1)"/></g></svg>
<div class="a" style="left:16px;top:1808px;width:2784px;height:19px;background:#283133;"></div>
</body></html>
